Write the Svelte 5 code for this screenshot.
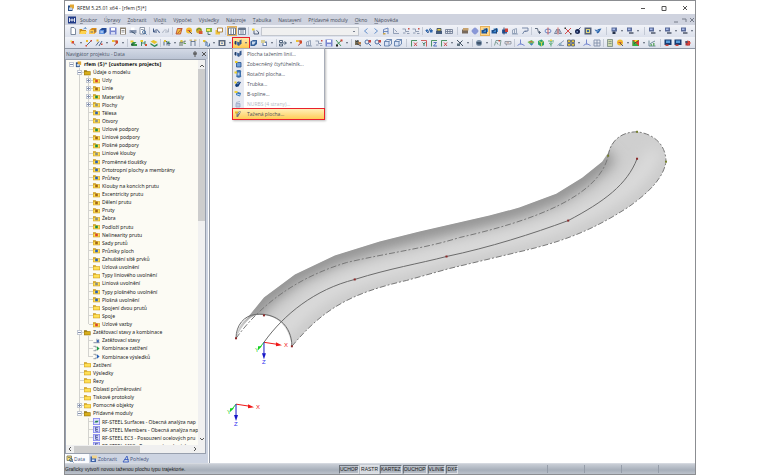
<script lang="ts">
	type Shape = [d: string, color: string, stroke?: boolean];
	type Node = { text: string; depth: number; icon: string; open?: boolean; bold?: boolean };

	// All glyphs are drawn on a 16 x 16 grid
	const icons: Record<string, Shape[]> = {
		doc: [['M4 1h6l3 3v11h-9z', '#fff'], ['M4 1h6l3 3v11h-9z', '#66758c', true]],
		open: [['M1 4h5l1 2h7v8H1z', '#c78d16'], ['M4 8h12l-3 6H1z', '#ffd34f'], ['M9 4l4-3v2h2', '#417ab7', true]],
		boxY: [['M1 6l5-4h9v8l-5 4H1z', '#d98b18'], ['M1 6h9v8H1z', '#ffc94c'], ['M3 10h5M12 4v6', '#50617b', true]],
		boxB: [['M1 6l5-4h9v8l-5 4H1z', '#244a95'], ['M1 6h9v8H1z', '#5e92e0'], ['M3 10h5', '#fff', true]],
		save: [['M1 1h14v14H1z', '#7784ce'], ['M4 2h8v5H4z', '#fff'], ['M4 10h8v5H4z', '#d4daf4']],
		report: [['M2 1h12v14H2z', '#8b8172'], ['M4 4h8v10H4z', '#fff'], ['M5 7h6M5 10h6', '#888', true]],
		print: [['M4 1h7v6H4z', '#fff'], ['M1 6h14v6H1z', '#8896b0'], ['M5 9l8 5', '#27415e', true]],
		preview: [['M2 1h9v13H2z', '#fff'], ['M2 1h9v13H2zM4 5h5', '#7b8798', true], ['M7 10a3 3 0 1 0 6 0a3 3 0 1 0-6 0M12 12l3 3', '#3d6797', true]],
		undo: [['M3 3v7h7M4 9q7-8 11 3', '#243f70', true]],
		redo: [['M13 3v7H6M12 9Q5 1 1 12', '#a5aebd', true]],
		pen: [['M2 14L5 3h9l-3 11z', '#f0c441'], ['M2 14L5 3h9l-3 11zM5 13L14 3', '#b9452c', true]],
		orbY: [['M2 7a6 6 0 1 1 12 0a6 6 0 1 1-12 0', '#f2b92e'], ['M8 8l6 6', '#445', true], ['M5 7h6', '#c4463c', true]],
		orbG: [['M2 7a6 6 0 1 1 12 0a6 6 0 1 1-12 0', '#d2a52a'], ['M4 7a4 4 0 1 1 8 0', '#3b8c4a', true], ['M8 8h7v6H8z', '#d65a34']],
		flag: [['M2 2h12v8H2z', '#8bb63d'], ['M4 4h6v4H4z', '#ffe65e'], ['M6 9v6h5', '#466', true]],
		folders: [['M1 6h9v9H1z', '#f2c33b'], ['M5 2h10v8H5z', '#fff'], ['M5 2h10v8H5z', '#a5762a', true]],
		panels: [['M1 2h14v13H1z', '#fff'], ['M1 2h14v13H1zM6 3v11M11 3v11', '#56647b', true]],
		table: [['M1 2h14v13H1z', '#f4f6fb'], ['M1 2h14v4H1z', '#66758c'], ['M1 2h14v13H1zM6 6v8M10 6v8', '#66758c', true]],
		newcase: [['M2 3h5v4H2z', '#f3d32c'], ['M6 7v7h9v-4l-4-3', '#3c4c66', true]],
		left: [['M11 3L5 8l6 5', '#4f81c4', true]],
		right: [['M5 3l6 5l-6 5', '#4f81c4', true]],
		frame: [['M3 14V5l9-3v12M3 9h9', '#5b7ab5', true], ['M2 12h5v3H2z', '#c6a24a']],
		axisG: [['M3 2v11h11M5 5l5 5', '#8392ac', true]],
		steps: [['M1 4h6v5h7M2 12h5M10 13h5', '#8390a8', true], ['M12 2h3v3h-3z', '#ca4b45']],
		wave: [['M1 7l5 5l4-9l5 4', '#1f4f8f', true], ['M2 5h4v4H2zM10 6h5v5h-5z', '#2b66b0']],
		tray: [['M2 8h12v6H2z', '#445a7a'], ['M4 3h8v5H4z', '#ecd24b'], ['M4 3h8v5H4z', '#39495e', true]],
		grid: [['M1 5h14v8H1zM1 9h14M5 5v8M10 5v8', '#6e7b92', true]],
		tag: [['M2 5h12v8H2z', '#77695c'], ['M4 2h11v5H4z', '#c6a26e']],
		plan: [['M4 4h8v8H4z', '#e3ebff'], ['M4 4h8v8H4zM8 1v14M1 8h14', '#5c6fc5', true]],
		solidB: [['M1 6h10v7H1z', '#1c579d'], ['M5 3h9v7H5z', '#438bcf'], ['M3 9l8-6v10', '#18345c', true]],
		solidR: [['M2 5h10v8H2z', '#315d9f'], ['M8 3h6v7H8z', '#ce4138'], ['M6 1v14', '#1b335a', true]],
		ghost: [['M3 13V6l8-3v10zM7 5v8M2 14h12', '#8a9ab1', true]],
		hand: [['M2 2h12v6H7l-4 6', '#63779b', true], ['M7 9h4', '#63779b', true]],
		link: [['M2 3h5l2 8h5M11 8v6', '#475569', true]],
		rotate: [['M2 8a6 4 0 1 1 12 0a6 4 0 1 1-12 0', '#5576bd', true], ['M8 1v14', '#cf4a42', true]],
		mirror: [['M1 13l5-9v9zM15 13l-5-9v9z', '#697792', true], ['M8 1v14', '#d34d42', true]],
		cross: [['M2 2l12 12M14 2L2 14', '#cf2d2c', true], ['M1 1h3v3H1zM12 12h3v3h-3z', '#333']],
		tick: [['M2 2l10 12M14 2L2 13', '#2c8a45', true], ['M11 1h4v4h-4z', '#d04334'], ['M2 11h4v4H2z', '#222']],
		bomb: [['M2 9a5 5 0 1 1 10 0a5 5 0 1 1-10 0', '#162451'], ['M9 5l4-4', '#162451', true], ['M5 8h3v3H5z', '#7b91c4']],
		chip: [['M1 1h14v14H1z', '#546079'], ['M4 4h8v8H4z', '#e0d67a'], ['M6 6h4v4H6z', '#2e67af']],
		birds: [['M1 5l5 1l3-2l6-1l-5 8l-3 2z', '#2a63a8'], ['M4 9l5-2', '#9bc3ef', true]],
		screen: [['M3 1h11v8H3z', '#5a6d9d'], ['M5 3h5v3H5z', '#aabbe8'], ['M5 9h6v5H5z', '#27334b']],
		screen2: [['M2 1h10v8H2z', '#596a99'], ['M4 3h5v3H4z', '#aabbe8'], ['M6 10h9v4H6z', '#747c8c']],
		node: [['M5 4h5v5H5z', '#dd4b2d'], ['M3 3h3v3H3z', '#f5dc38'], ['M9 9l4 3', '#667', true]],
		line: [['M2 14L13 3', '#364e71', true], ['M2 2h4v4H2z', '#edbd29'], ['M11 2h3v3h-3zM1 12h3v3H1z', '#d04334']],
		line2: [['M2 13L8 5M8 14l6-10', '#364e71', true], ['M3 1h4v4H3z', '#edbd29'], ['M12 9h3v3h-3z', '#d04334']],
		arc: [['M3 4h9q0 7-6 9', '#a64038', true], ['M2 2h5v4H2z', '#efc12d'], ['M9 3h5v6H9z', '#d14a2b']],
		mats: [['M1 3h6v4H1z', '#eacd27'], ['M5 6h8l-4 4h5v4H3z', '#379444'], ['M2 9h5v4H2z', '#295d42']],
		mats2: [['M3 2v12M3 8h7M10 4v8h4', '#2c7850', true], ['M1 2h5v4H1z', '#e8cd22'], ['M10 10h4v4h-4z', '#d35032']],
		layers: [['M1 5l6-3l8 4l-6 4z', '#e8c52c'], ['M1 8l8 5l6-4v4l-6 3l-8-5z', '#2c8754']],
		support: [['M2 13V5h6v8M8 9h7M12 9v5', '#3f556f', true], ['M2 2h4v4H2z', '#e3c42f'], ['M9 5h4v3H9z', '#3a8b52']],
		spring: [['M2 14V6h10V3M6 6v8', '#4b5e49', true], ['M3 2h4v4H3z', '#dbc53a'], ['M9 8h5v2H9z', '#68a158']],
		joint: [['M4 3v11M12 3v11M4 5h8', '#596d88', true], ['M1 1h5v3H1zM10 1h5v3h-5z', '#cdbb82']],
		surf: [['M2 2h5v4H2z', '#e8c52c'], ['M5 6h5v8h5V9', '#345989', true], ['M6 8h6v6H6z', '#8ba6cb']],
		hole: [['M1 2h14v12H1z', '#58667c'], ['M4 5h8v7H4z', '#f3e8d2'], ['M6 7h4v3H6z', '#7791b7']],
		extrude: [['M1 5l4-1v7l-4-1z', '#294d80'], ['M6 5l4 2v7l-4-2z', '#4f78b2'], ['M11 3l4-2v8l-4 4z', '#31568c'], ['M3 4v7M10 6v7', '#1d355b', true]],
		shell: [['M1 5l5-3h8v8l-5 4H1z', '#325f99'], ['M4 5h8l-4 6H4z', '#c9daed']],
		quad: [['M5 5h9v9H5z', '#6f9fd6'], ['M5 5h9v9H5z', '#2c5690', true], ['M2 2h5v4H2z', '#e9cb26']],
		cylinder: [['M5 4a5 3 0 1 1 9 0v7a5 3 0 1 1-9 0z', '#3c70ac'], ['M7 5h4v6H7z', '#b8d1ec'], ['M1 3h5v4H1z', '#e9cb26']],
		tube: [['M2 10L8 3l6 1l-5 9l-5 1z', '#123b78'], ['M6 8l5-3', '#8fb8e4', true], ['M1 3h4v4H1z', '#e9cb26']],
		bspline: [['M5 3l9 3l-2 7l-8-3z', '#3274b8'], ['M1 2h6v4H1z', '#eed138'], ['M6 8l6 2', '#d2e6fa', true]],
		nurbs: [['M4 7h8v7H4z', '#c1cbe2'], ['M4 7h8v7H4zM4 5l8-2', '#a1adc9', true]],
		sweep: [['M5 5l8-3v3L8 14H5z', '#75777b'], ['M2 3h6v4H2z', '#e7ba27'], ['M7 8l5-4', '#ddd', true]],
		copy: [['M5 5h9v9H5z', '#6d84ad'], ['M2 2h8v6H2z', '#d7ce95'], ['M7 8h5v4H7z', '#fff']],
		branch: [['M1 3h6v4H1zM1 10h6v4H1zM7 8h7M11 5l4 3l-4 3', '#3b506c', true]],
		grab: [['M2 3h8v9H2z', '#786f56'], ['M3 3l3 3l2-4M5 9l9 5', '#2a3548', true], ['M9 6h5v5H9z', '#b07a48']],
		zoomR: [['M2 6a4 4 0 1 1 8 0a4 4 0 1 1-8 0M9 9l5 5', '#375f9a', true], ['M9 2h5v5H9z', '#c9453f']],
		cube: [['M1 5h9v9H1z', '#dbe5f7'], ['M1 5l5-4h9v9l-5 4H1zM1 5h9v9M10 5l5-4', '#5878a9', true]],
		gx: [['M3 15V3h11', '#31844c', true], ['M8 7l6 7M14 7l-6 7', '#c93835', true]],
		gy: [['M2 3h11v12', '#c94643', true], ['M5 7l3 3l3-4M8 10v4', '#286e4e', true]],
		gz: [['M3 15V3h11', '#31844c', true], ['M7 7h6l-6 7h7', '#3a5fb4', true]],
		tools: [['M2 2l12 12M13 3L7 9', '#263749', true], ['M2 9h6v5H2z', '#5e717f']],
		globe: [['M2 8a6 6 0 1 1 12 0a6 6 0 1 1-12 0', '#778da5'], ['M3 6h9v5H5z', '#3e546e']],
		moment: [['M1 13L4 3h10l-2 11M5 6l3 5', '#6b8e84', true], ['M9 2h3v3H9z', '#d05145']],
		support2: [['M2 5h12v5H2zM5 10v3', '#8a8f99', true], ['M5 6h5v3H5z', '#c9b3ad']],
		tri: [['M7 1v8l-6 4M7 9l8 4', '#6176c8', true], ['M5 10h5v2H5z', '#9aa8de']],
		rainbow: [['M1 6l8-4l6 4l-6 7z', '#6bc25a'], ['M3 6l6-2l3 3z', '#e05442'], ['M5 9h8l-4 4z', '#3d77d5']],
		cubeG: [['M2 4l7-3l5 4v7l-6 3l-6-4z', '#2ca36f'], ['M4 5l5 2v7M9 7l4-2', '#f0db43', true]],
		tree: [['M8 15V4M2 4h12M4 8l4 3l4-4', '#49a06a', true], ['M6 1h4v3H6z', '#ead24b']],
		slope: [['M1 13L14 3M4 13h10', '#7b8da7', true], ['M4 8h5v4H4z', '#8eb3c8']],
		tiles: [['M1 2h6v5H1zM9 2h6v5H9zM1 9h6v5H1zM9 9h6v5H9z', '#e9c52e'], ['M1 2h6v5H1zM9 2h6v5H9zM1 9h6v5H1zM9 9h6v5H9z', '#56637b', true]],
		tiles2: [['M2 2h12v12H2zM8 2v12M2 8h12', '#7d8ba7', true]],
		list: [['M3 1h10v14H3z', '#ccd9ae'], ['M3 1h10v14H3zM5 5h6M5 9h6', '#7c8c83', true]],
		colors: [['M1 2h13v12H1z', '#e5382e'], ['M1 2l13 12H1z', '#34ad42'], ['M5 2h9L6 9z', '#f1dd28'], ['M4 9l9-6', '#333', true]],
		chart: [['M2 3v11h13M4 10l4-3l6-3', '#5b7e8c', true], ['M5 10h3v4H5zM10 8h3v6h-3z', '#67ac6e']],
		monitor: [['M1 1h14v11H1z', '#193d72'], ['M4 3h8v5H4z', '#579cd9'], ['M3 11h6v3H3z', '#d4463b']],
		exit: [['M3 4h9v9H3z', '#a9333a'], ['M7 2v12l7-6z', '#dc4338'], ['M3 4h4v4H3z', '#46536b']],
		app: [['M2 3h9v11H2z', '#284d85'], ['M6 1h8v8H6z', '#e2a733'], ['M4 7h6v5H4z', '#bdd3ed']],
		logo: [['M0 1h16v14H0z', '#203a87'], ['M3 4v8M13 4v8M3 8h10M8 5v6', '#fff', true]],
		folder: [['M0 3h6l2 2h8v9H0z', '#c9981c'], ['M1 6h14v7H1z', '#ffdf55']],
		folderOpen: [['M0 3h6l2 2h7v9H0z', '#8e6f0c'], ['M1 6h13v7H1z', '#d8ae1b']],
		loads: [['M1 13h14M9 4v7h4V5', '#56658a', true], ['M9 7h4v5H9z', '#3766b5']],
		combG: [['M1 3h6v4M1 13h6V9', '#76808d', true], ['M9 3l6 5l-6 5z', '#1f9f46']],
		combB: [['M1 3h6v4M1 13h6V9', '#76808d', true], ['M9 3l6 5l-6 5z', '#2460b8']],
		module: [['M0 0h16v16H0z', '#8b8df0'], ['M2 2h12v12H2z', '#dfe0ff'], ['M4 4h8M6 4v8h6M7 8h4', '#26348a', true]],
		moduleS: [['M0 0h16v16H0z', '#8b8df0'], ['M2 2h12v12H2z', '#dfe0ff'], ['M3 10l3-4h7l-3 4z', '#218052']],
		data: [['M2 2h9v9H2z', '#ffe27a'], ['M2 2h9v9H2zM4 5h5', '#7b7a58', true], ['M7 10a3 3 0 1 0 6 0a3 3 0 1 0-6 0M12 12l3 3', '#3d6797', true]],
		eye: [['M1 3h11v11H1z', '#3f64a8'], ['M4 1h10v6H4z', '#f1d38b'], ['M4 9h5v3H4z', '#dfe8f8']],
		view: [['M2 14L10 2l3 12zM5 9h8', '#3156bd', true]]
	};

	// Small marks that lie over the plain folder in the tree
	const marks: Record<string, string> = {
		red: '#d8442e',
		green: '#1f8a45',
		blue: '#2c5fb5',
		grey: '#8a8f83',
		brown: '#a06418'
	};

	// "|" is a thin divider, "||" ends a bar, "v" is a drop-down arrow, "*" marks a pressed button
	const upper =
		'doc open boxY boxB save report print preview | undo redo | pen orbY orbG flag folders | panels* table | newcase combo left right frame axisG steps steps | wave tray grid || tag plan solidB* solidB solidR ghost hand | link rotate mirror cross bomb chip birds || screen v screen2 v || screen2 v screen2 v screen2 v';
	const lower =
		'node v line line2 v arc v | mats mats2 layers | support v spring joint | surf v hole v extrude+ shell copy v | branch v arc ghost steps save tick v | grab zoomR zoomR cube cube || gx gy gz gx v tools v | globe v | moment support2 | tri rainbow cubeG tree slope tiles v tri tiles2 | list orbY v colors v chart || monitor monitor exit';

	const menu = [
		['', 'S', 'oubor'],
		['Úpr', 'a', 'vy'],
		['', 'Z', 'obrazit'],
		['Vlo', 'ž', 'it'],
		['Vý', 'p', 'očet'],
		['Výsled', 'k', 'y'],
		['Ná', 's', 'troje'],
		['', 'T', 'abulka'],
		['Nasta', 'v', 'ení'],
		['Př', 'í', 'davné moduly'],
		['', 'O', 'kno'],
		['', 'N', 'ápověda']
	];

	const surfaces = [
		{ icon: 'extrude', text: 'Plocha tažením linií...' },
		{ icon: 'quad', text: 'Zobecněný čtyřúhelník...' },
		{ icon: 'cylinder', text: 'Rotační plocha...' },
		{ icon: 'tube', text: 'Trubka...' },
		{ icon: 'bspline', text: 'B-spline...' },
		{ icon: 'nurbs', text: 'NURBS (4 strany)...', disabled: true },
		{ icon: 'sweep', text: 'Tažená plocha...', active: true }
	];

	const leaf = (text: string, icon = 'folder'): Node => ({ text, icon, depth: 2 });

	const tree: Node[] = [
		{ text: 'rfem (5)* [customers projects]', depth: 0, icon: 'app', open: true, bold: true },
		{ text: 'Údaje o modelu', depth: 1, icon: 'folderOpen', open: true },
		{ ...leaf('Uzly', 'red'), open: false },
		{ ...leaf('Linie', 'brown'), open: false },
		{ ...leaf('Materiály', 'green'), open: false },
		{ ...leaf('Plochy', 'grey'), open: false },
		leaf('Tělesa', 'blue'),
		leaf('Otvory', 'grey'),
		leaf('Uzlové podpory', 'green'),
		leaf('Liniové podpory', 'brown'),
		leaf('Plošné podpory', 'green'),
		leaf('Liniové klouby', 'grey'),
		leaf('Proměnné tloušťky', 'blue'),
		leaf('Ortotropní plochy a membrány', 'blue'),
		leaf('Průřezy', 'blue'),
		leaf('Klouby na koncích prutu', 'brown'),
		leaf('Excentricity prutu', 'brown'),
		leaf('Dělení prutu', 'brown'),
		leaf('Pruty', 'brown'),
		leaf('Žebra', 'grey'),
		leaf('Podloží prutu', 'green'),
		leaf('Nelinearity prutu', 'red'),
		leaf('Sady prutů', 'brown'),
		leaf('Průniky ploch', 'blue'),
		leaf('Zahuštění sítě prvků', 'blue'),
		leaf('Uzlová uvolnění'),
		leaf('Typy liniového uvolnění'),
		leaf('Liniová uvolnění', 'grey'),
		leaf('Typy plošného uvolnění', 'blue'),
		leaf('Plošná uvolnění', 'blue'),
		leaf('Spojení dvou prutů'),
		leaf('Spoje'),
		leaf('Uzlové vazby', 'red'),
		{ text: 'Zatěžovací stavy a kombinace', depth: 1, icon: 'folderOpen', open: true },
		leaf('Zatěžovací stavy', 'loads'),
		leaf('Kombinace zatížení', 'combG'),
		leaf('Kombinace výsledků', 'combB'),
		{ text: 'Zatížení', depth: 1, icon: 'folder' },
		{ text: 'Výsledky', depth: 1, icon: 'folder' },
		{ text: 'Řezy', depth: 1, icon: 'folder' },
		{ text: 'Oblasti průměrování', depth: 1, icon: 'folder' },
		{ text: 'Tiskové protokoly', depth: 1, icon: 'folder' },
		{ text: 'Pomocné objekty', depth: 1, icon: 'folder', open: false },
		{ text: 'Přídavné moduly', depth: 1, icon: 'folderOpen', open: true },
		leaf('RF-STEEL Surfaces - Obecná analýza nap', 'moduleS'),
		leaf('RF-STEEL Members - Obecná analýza nap', 'module'),
		leaf('RF-STEEL EC3 - Posouzení ocelových pru', 'module'),
		leaf('RF-STEEL AISC - Posouzení ocelových pr', 'module')
	];

	// Which vertical guides run on below row i
	function guide(i: number, col: number) {
		if (col === 0) return '';
		let more = false;
		for (let j = i + 1; j < tree.length && tree[j].depth >= col; j++) {
			if (tree[j].depth === col) more = true;
		}
		if (col === tree[i].depth) return more ? 'tee' : 'end';
		return more ? 'down' : '';
	}

	const snaps = ['UCHOP', 'RASTR', 'KARTEZ', 'OUCHOP', 'VLINIE', 'DXF'];
	let snapOn = $state('RASTR');

	// Model geometry
	const outline =
		'M236 339C237 326 246 320 247 319L264 298L295 275L335 256L380 242L420 232L490 216L520 208L557 194L583 178L603 162L609 153C612 139 624 132 638 132C655 134 667 145 667 162C664 181 645 196 630 207C590 233 560 243 517 253L450 269L407 281C350 294 323 310 292 347C289 328 279 318 264 316C259 315 254 315 249 320C242 327 240 332 236 339Z';
	const ridge = 'M247 319L264 298L295 275L335 256L380 242L420 232L490 216L520 208L557 194L583 178L603 162L609 153';
	const inner = 'M236 339C262 303 300 277 347 263C390 253 425 249 460 238C530 222 600 198 609 156';
	const axis = 'M264 343C284 315 315 290 355 280C390 269 420 264 447 257C490 248 534 234 569 221C605 202 628 185 638 159';
	const lowerEdge = 'M292 347C323 310 350 294 407 281L450 269L517 253C560 243 590 233 630 207C645 196 664 181 667 162';
	const endArc = 'M609 156C612 139 624 132 638 132C655 134 667 145 667 162';
	const nodes = [[236, 339], [264, 316], [292, 347], [355, 280], [447, 257], [569, 221], [638, 159]];
</script>

{#snippet glyph(name: string)}
	<svg class="glyph" viewBox="0 0 16 16" aria-hidden="true">
		{#each icons[marks[name] ? 'folder' : name] as [d, color, stroke]}
			<path {d} fill={stroke ? 'none' : color} stroke={stroke ? color : 'none'} stroke-width="1.7" />
		{/each}
		{#if marks[name]}
			<path d="M5 6h6v6H5z" fill={marks[name]} />
		{/if}
	</svg>
{/snippet}

{#snippet toolbar(items: string)}
	<div class="toolbar">
		{#each items.split(' ') as item}
			{#if item === '|'}
				<span class="sep"></span>
			{:else if item === '||'}
				<span class="sep wide"></span>
			{:else if item === 'v'}
				<button class="arrow" aria-label="Více"></button>
			{:else if item === 'combo'}
				<select aria-label="Zatěžovací stav"><option></option></select>
			{:else if item.endsWith('+')}
				<div class="split">
					<button class="tool" aria-label="Plocha">{@render glyph(item.slice(0, -1))}</button>
					<button class="arrow" aria-label="Typ plochy"></button>
					<ul class="dropdown">
						{#each surfaces as s}
							<li>
								<button class:active={s.active} disabled={s.disabled}>
									<span class="pic">{@render glyph(s.icon)}</span>{s.text}
								</button>
							</li>
						{/each}
					</ul>
				</div>
			{:else}
				{@const name = item.replace('*', '')}
				<button class="tool" class:pressed={item.endsWith('*')} aria-label={name}>{@render glyph(name)}</button>
			{/if}
		{/each}
	</div>
{/snippet}

{#snippet triad(x: number, y: number)}
	<g class="triad" transform={`translate(${x} ${y})`}>
		<path d="M0 0L13 2" stroke="#f01818" />
		<path d="M12 0l6 3l-6 1z" fill="#f01818" />
		<path d="M0 0L-4 5" stroke="#10d020" />
		<path d="M-2 4l-4 4l0-4z" fill="#10d020" />
		<path d="M0 0V12" stroke="#1818c8" />
		<path d="M-2 11h4l-2 6z" fill="#1818c8" />
		<text x="20" y="5" fill="#f01818">X</text>
		<text x="-9" y="10" fill="#10d020">Y</text>
		<text x="-2" y="22" fill="#3030f0">Z</text>
	</g>
{/snippet}

<div class="window">
	<header class="title">
		{@render glyph('app')}
		<span>RFEM 5.25.01 x64 - [rfem (5)*]</span>
		<div class="controls">
			<button aria-label="Minimalizovat"><svg viewBox="0 0 6 6"><path d="M1 3.5h4" /></svg></button>
			<button aria-label="Maximalizovat"><svg viewBox="0 0 6 6"><path d="M1 1.5h4v4H1z" /></svg></button>
			<button aria-label="Zavřít"><svg viewBox="0 0 6 6"><path d="M1 1l4 4M5 1L1 5" /></svg></button>
		</div>
	</header>

	<nav class="menu">
		{@render glyph('logo')}
		<div class="entries">
			{#each menu as [before, key, after]}
				<button>{before}<u>{key}</u>{after}</button>
			{/each}
		</div>
		<div class="mdi">
			<button aria-label="Minimalizovat okno"><svg viewBox="0 0 6 6"><path d="M1 5h4" /></svg></button>
			<button aria-label="Obnovit okno"><svg viewBox="0 0 6 6"><path d="M1 2h4v3" /></svg></button>
			<button aria-label="Zavřít okno"><svg viewBox="0 0 6 6"><path d="M1 1l4 4M5 1L1 5" /></svg></button>
		</div>
	</nav>

	{@render toolbar(upper)}
	{@render toolbar(lower)}

	<main>
		<aside>
			<div class="caption">
				<span>Navigátor projektu - Data</span>
				<button aria-label="Připnout"><svg viewBox="0 0 6 6"><path d="M2 1h2v2H2zM1 3h4M3 3v3" /></svg></button>
				<button aria-label="Zavřít panel"><svg viewBox="0 0 6 6"><path d="M1 1l4 4M5 1L1 5" /></svg></button>
			</div>
			<div class="box">
				<div class="view">
					<ul class="tree">
						{#each tree as node, i}
							<li class:bold={node.bold}>
								{#each { length: node.depth + 1 } as _, col}
									<span class="col {guide(i, col)}">
										{#if col === node.depth && node.open !== undefined}
											<button class="toggle" class:plus={!node.open} aria-label={node.text}></button>
										{/if}
									</span>
								{/each}
								{@render glyph(node.icon)}
								<span class="label">{node.text}</span>
							</li>
						{/each}
					</ul>
					<div class="vbar">
						<svg viewBox="0 0 6 6"><path d="M1 4l2-2l2 2" /></svg>
						<div class="thumb"></div>
						<svg viewBox="0 0 6 6"><path d="M1 2l2 2l2-2" /></svg>
					</div>
				</div>
				<div class="hbar">
					<svg viewBox="0 0 6 6"><path d="M4 1l-2 2l2 2" /></svg>
					<div class="thumb"></div>
					<svg viewBox="0 0 6 6"><path d="M2 1l2 2l-2 2" /></svg>
				</div>
			</div>
			<div class="tabs">
				<button class="current">{@render glyph('data')}Data</button>
				<button>{@render glyph('eye')}Zobrazit</button>
				<button>{@render glyph('view')}Pohledy</button>
			</div>
		</aside>

		<section>
			<svg class="scene" viewBox="211 49 484 415">
				<defs>
					<clipPath id="body"><path d={outline} /></clipPath>
					<filter id="soft" x="-20%" y="-20%" width="140%" height="140%">
						<feGaussianBlur stdDeviation="7" />
					</filter>
				</defs>
				<g clip-path="url(#body)">
					<path d={outline} fill="#cfcfcf" />
					<g filter="url(#soft)" fill="none">
						<path d={ridge} stroke="#8e8e8e" stroke-width="18" />
						<path d={lowerEdge} stroke="#dedede" stroke-width="12" transform="translate(-12 -12)" />
						<path d={lowerEdge} stroke="#c6c6c6" stroke-width="6" />
					</g>
				</g>
				<path class="edge" d="M236 339C236 326 244 316 256 315C276 313 292 326 292 347" />
				<path class="edge" d={axis} />
				<path class="edge dashed" d={inner} />
				<path class="edge dashed" d={lowerEdge} />
				<path class="edge dashed" d={endArc} />
				{#each nodes as [x, y]}
					<rect x={x - 1} y={y - 1} width="2" height="2" fill="#8c2626" />
				{/each}
				{#each [[609, 156], [638, 132], [667, 162]] as [x, y]}
					<rect x={x - 1} y={y - 1} width="2" height="2" fill="#76802c" />
				{/each}
				{@render triad(264, 343)}
				{@render triad(236, 405)}
			</svg>
		</section>
	</main>

	<footer>
		<span class="hint">Graficky vytvoří novou taženou plochu typu trajektorie.</span>
		{#each snaps as s}
			<button class:on={s === snapOn} onclick={() => (snapOn = s)}>{s}</button>
		{/each}
		<div class="fields"><span></span><span></span><span></span><span></span></div>
	</footer>
</div>

<style>
	:global(body) {
		margin: 0;
		background: #fff;
	}

	.window {
		display: flex;
		flex-direction: column;
		box-sizing: border-box;
		height: 100vh;
		margin: 0 64px;
		border: 1px solid #8b8d91;
		font: 5px/8px 'Open Sans', 'Noto Sans', sans-serif;
		color: #222;
	}

	button {
		display: flex;
		align-items: center;
		justify-content: center;
		padding: 0;
		border: 0;
		background: none;
		font: inherit;
		color: inherit;
		white-space: nowrap;
	}

	ul {
		margin: 0;
		padding: 0;
		list-style: none;
	}

	svg {
		flex: none;
		width: 6px;
		height: 6px;
		fill: none;
		stroke: #555;
	}

	svg.glyph {
		width: 8px;
		height: 8px;
		stroke: none;
	}

	.title {
		display: flex;
		align-items: center;
		gap: 2px;
		height: 13px;
		padding: 0 2px;
		background: #fff;
	}

	.controls {
		display: flex;
		gap: 15px;
		margin-left: auto;
		padding-right: 5px;
	}

	.menu {
		display: flex;
		align-items: center;
		height: 11px;
		padding: 0 0 0 3px;
		background: #cfd3df;
		color: #444b59;
	}

	.entries {
		display: flex;
		gap: 7px;
		padding-left: 4px;
	}

	.menu u {
		text-decoration-thickness: 1px;
		text-decoration-color: #8b91a0;
	}

	.entries button {
		display: block;
	}

	.mdi {
		display: flex;
		gap: 2px;
		margin-left: auto;
	}

	.mdi svg {
		stroke: #777d8a;
	}

	.toolbar {
		display: flex;
		align-items: center;
		height: 12px;
		padding-left: 3px;
		background: linear-gradient(#f1f3f8, #dce1ec);
	}

	.toolbar + .toolbar {
		height: 11px;
		border-bottom: 1px solid #8e96a5;
	}

	.tool {
		width: 10px;
		height: 10px;
	}

	.pressed {
		background: #ffd68a;
		box-shadow: inset 0 0 0 1px #e6b25c;
	}

	.arrow {
		width: 6px;
		height: 8px;
	}

	.arrow::before {
		content: '';
		border: 1px solid transparent;
		border-top: 2px solid #555f70;
		border-bottom: 0;
	}

	.sep {
		width: 3px;
		height: 8px;
		background: linear-gradient(#c3c9d5, #c3c9d5) center / 1px 100% no-repeat;
	}

	.sep.wide {
		width: 6px;
	}

	.toolbar select {
		width: 98px;
		height: 9px;
		margin: 0 2px 0 1px;
		padding: 0;
		border: 1px solid #c3c7ce;
		appearance: none;
		background:
			linear-gradient(#7b8290, #7b8290) right 3px center / 2px 1px no-repeat,
			#f0f0f0;
	}

	.split {
		position: relative;
		display: flex;
		align-items: center;
		box-sizing: border-box;
		width: 16px;
		height: 10px;
		outline: 1px solid #e8202c;
		background: linear-gradient(#ffe9a8, #ffc94f);
	}

	.dropdown {
		position: absolute;
		top: 10px;
		left: -1px;
		z-index: 2;
		width: 91px;
		border: 1px solid #a8adb8;
		background: linear-gradient(90deg, #e6e9f1 11px, #fff 11px);
		box-shadow: 1px 1px 2px #0004;
	}

	.dropdown button {
		justify-content: flex-start;
		gap: 4px;
		box-sizing: border-box;
		width: 100%;
		height: 10px;
		color: #4a4f5a;
	}

	.dropdown button:disabled {
		color: #b5b8c0;
	}

	.dropdown .active {
		outline: 1px solid #e8202c;
		background: linear-gradient(#fff0b8, #ffcc58);
	}

	.pic {
		display: flex;
		justify-content: center;
		width: 10px;
	}

	main {
		display: flex;
		flex: 1;
		min-height: 0;
	}

	aside {
		display: flex;
		flex-direction: column;
		width: 143px;
		background: #cdd4e2;
	}

	.caption {
		display: flex;
		align-items: center;
		gap: 3px;
		height: 10px;
		padding: 0 1px;
		background: linear-gradient(#d3d9e5, #bbc4d4);
		color: #4b5568;
	}

	.caption span {
		margin-right: auto;
	}

	.box {
		display: flex;
		flex: 1;
		flex-direction: column;
		min-height: 0;
		margin: 0 2px 0 0;
		border: 1px solid #98a0ae;
		background: #fcfbf4;
	}

	.view {
		display: flex;
		flex: 1;
		min-height: 0;
		overflow: hidden;
	}

	.tree {
		display: grid;
		grid-auto-rows: 1fr;
		flex: 1;
		min-width: 0;
		height: calc(100% + 5px);
		overflow: hidden;
		font-family: 'Noto Sans', sans-serif;
	}

	.tree li {
		display: flex;
		align-items: center;
		min-height: 0;
		white-space: nowrap;
	}

	.tree .glyph {
		width: 7px;
		height: 7px;
		margin-right: 2px;
	}

	.tree .bold {
		font-family: 'DejaVu Sans Condensed', 'DejaVu Sans', sans-serif;
		font-weight: bold;
	}

	.col {
		display: flex;
		flex: none;
		align-items: center;
		justify-content: center;
		align-self: stretch;
		width: 9px;
	}

	.down,
	.tee {
		background: linear-gradient(#d3d3cf, #d3d3cf) 4px 0 / 1px 100% no-repeat;
	}

	.end {
		background: linear-gradient(#d3d3cf, #d3d3cf) 4px 0 / 1px 50% no-repeat;
	}

	.tee::after,
	.end::after {
		content: '';
		width: 4px;
		height: 1px;
		margin-left: auto;
		background: #d3d3cf;
	}

	.toggle {
		flex: none;
		box-sizing: border-box;
		width: 5px;
		height: 5px;
		margin-left: 2px;
		border: 1px solid #c3c8d2;
		background: linear-gradient(#8491ad, #8491ad) center / 3px 1px no-repeat #fff;
	}

	.toggle.plus {
		background:
			linear-gradient(#8491ad, #8491ad) center / 3px 1px no-repeat,
			linear-gradient(#8491ad, #8491ad) center / 1px 3px no-repeat #fff;
	}

	.vbar {
		display: flex;
		flex-direction: column;
		align-items: center;
		justify-content: space-between;
		width: 7px;
		padding: 3px 0;
		background: #f0f0f0;
	}

	.vbar .thumb {
		width: 7px;
		height: 40%;
		margin-bottom: auto;
		background: #cdcdcd;
	}

	.hbar {
		display: flex;
		align-items: center;
		height: 8px;
		padding: 0 7px 0 1px;
		background: #f0f0f0;
	}

	.hbar .thumb {
		width: 50%;
		height: 7px;
		margin: 0 auto 0 1px;
		background: #cdcdcd;
	}

	.tabs {
		display: flex;
		height: 9px;
		color: #3e5078;
	}

	.tabs button {
		padding: 0 4px 0 1px;
	}

	.tabs .current {
		background: #fbfcfe;
	}

	section {
		flex: 1;
		min-width: 0;
		margin-left: 1px;
		border-left: 1px solid #9097a3;
		background: #fff;
	}

	svg.scene {
		display: block;
		width: 100%;
		height: 100%;
		stroke: none;
	}

	.edge {
		fill: none;
		stroke: #6a6a6a;
		stroke-width: 1px;
	}

	.dashed {
		stroke: #777;
		stroke-dasharray: 6 2 2 2;
	}

	.triad text {
		font: 6px 'Liberation Sans', sans-serif;
	}

	footer {
		display: flex;
		align-items: center;
		height: 10px;
		border-top: 1px solid #d5d9e0;
		background: linear-gradient(#c9ced6, #a7afba 60%, #bcc2cb);
		font-family: 'Liberation Sans', sans-serif;
	}

	.hint {
		width: 274px;
	}

	footer button {
		box-sizing: border-box;
		height: 9px;
		margin-right: 1px;
		border: 1px solid #6d747e;
		border-right-color: #dde0e5;
		border-bottom-color: #dde0e5;
	}

	footer .on {
		border-color: #dde0e5;
		background: #d6dae0;
	}

	.fields {
		display: flex;
		margin-left: auto;
	}

	.fields span {
		width: 36px;
		height: 8px;
		border-left: 1px solid #959da9;
	}
</style>
